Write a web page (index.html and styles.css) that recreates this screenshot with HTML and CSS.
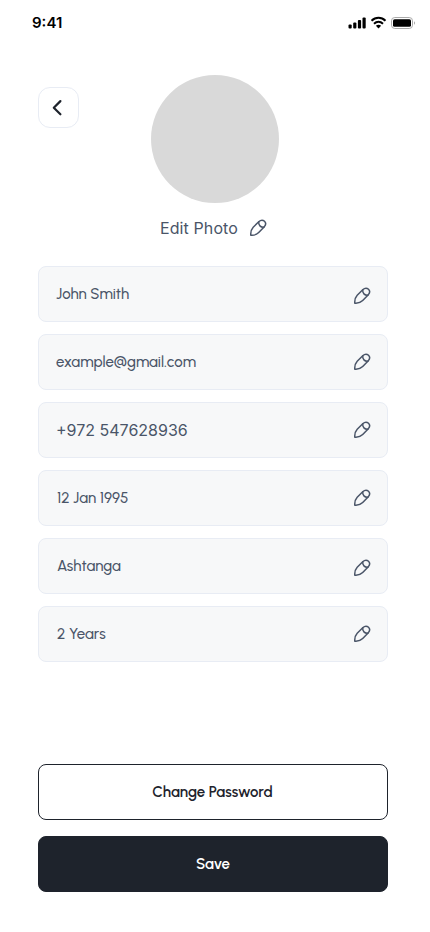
FILE: index.html
```html
<!DOCTYPE html>
<html lang="en">
<head>
<meta charset="utf-8">
<meta name="viewport" content="width=device-width, initial-scale=1">
<title>Edit Profile</title>
<link rel="stylesheet" href="styles.css">
</head>
<body>
<svg class="defs" aria-hidden="true">
  <symbol id="pencil" viewBox="0 0 18 18">
    <path d="M1.8 16.2C1.5 12.9 2.2 10.4 4.2 8.2L9.7 2.8C11.6 1 14 .9 15.5 2.3C17 3.8 16.8 6.2 15.1 8L9.7 13.6C7.6 15.7 5.2 16.5 1.8 16.2Z"/>
    <path d="M9.8 2.9C9.2 6.1 11.7 8.6 15 8.1"/>
  </symbol>
</svg>
<header class="status">
  <span class="time">9:41</span>
  <svg class="indicators" viewBox="0 0 68 14">
    <rect x="0.5" y="8.5" width="3.2" height="4" rx="1"/>
    <rect x="5.2" y="6.5" width="3.2" height="6" rx="1"/>
    <rect x="9.9" y="4" width="3.2" height="8.5" rx="1"/>
    <rect x="14.5" y="1.5" width="3.2" height="11" rx="1"/>
    <path class="wave" d="M23.5 4.8C27.6 .8 33.4 .8 37.5 4.8M26 7.7C28.7 5.2 32.3 5.2 35 7.7"/>
    <path d="M27.9 9.8C29.4 8.5 31.6 8.5 33.1 9.8L30.5 12.5Z"/>
    <rect class="shell" x="43.5" y="1.5" width="21" height="11" rx="3.3"/>
    <rect x="45" y="3.2" width="18" height="7.6" rx="1.6"/>
    <path class="cap" d="M66 5.2C67.4 5.8 67.4 8.2 66 8.8Z"/>
  </svg>
</header>
<main>
  <section class="profile">
    <button class="back" aria-label="Back"><svg viewBox="0 0 12 18"><path d="M9.4 2.1L2.8 8.7L9.4 15.3"/></svg></button>
    <div class="avatar"></div>
  </section>
  <div class="photo"><span>Edit Photo</span><svg class="pencil"><use href="#pencil"/></svg></div>
  <section class="fields">
    <div class="field"><span>John Smith</span><svg class="pencil low"><use href="#pencil"/></svg></div>
    <div class="field"><span>example@gmail.com</span><svg class="pencil"><use href="#pencil"/></svg></div>
    <div class="field"><span class="phone">+972 547628936</span><svg class="pencil"><use href="#pencil"/></svg></div>
    <div class="field inset"><span>12 Jan 1995</span><svg class="pencil"><use href="#pencil"/></svg></div>
    <div class="field inset"><span>Ashtanga</span><svg class="pencil low"><use href="#pencil"/></svg></div>
    <div class="field inset"><span>2 Years</span><svg class="pencil"><use href="#pencil"/></svg></div>
  </section>
  <section class="actions">
    <button class="action outline">Change Password</button>
    <button class="action solid">Save</button>
  </section>
</main>
</body>
</html>
```
FILE: styles.css
```css
* { box-sizing: border-box; }
body { margin: 0; width: 430px; height: 932px; overflow: hidden; background: #fff; color: #4a5568; font-family: Urbanist, Lato, sans-serif; }
button { padding: 0; font: inherit; }
svg { display: block; flex: none; }
.defs { display: none; }
.status { height: 46px; padding: 0 14px 0 32px; display: flex; align-items: center; justify-content: space-between; color: #000; }
.time { font: 600 15px/18px Inter, sans-serif; }
.indicators { width: 68px; height: 14px; }
.indicators .wave { fill: none; stroke: #000; stroke-width: 2; }
.indicators .shell { fill: none; stroke: #aaa; }
.indicators .cap { fill: #aaa; }
main { padding: 29px 42px 0 38px; }
.profile { display: flex; align-items: flex-start; height: 128px; }
.back { margin-top: 12px; width: 41px; height: 41px; border: 1px solid #e8ecf4; border-radius: 12px; background: #fff; display: flex; align-items: center; justify-content: center; }
.back svg { width: 12px; height: 18px; margin-right: 4px; }
.back path { fill: none; stroke: #1e232c; stroke-width: 2.2; stroke-linecap: round; stroke-linejoin: round; }
.avatar { width: 128px; height: 128px; margin-left: 72px; border-radius: 50%; background: #d9d9d9; }
.photo { display: flex; align-items: center; height: 20px; margin: 15px 0 0 122px; gap: 11px; font: 400 16px/20px Inter, sans-serif; }
.photo span { letter-spacing: 0.1px; }
.pencil { width: 18px; height: 18px; fill: none; stroke: #4a5568; stroke-width: 1.5; stroke-linecap: round; stroke-linejoin: round; }
.low { margin-top: 4px; }
.fields { display: grid; gap: 12px; margin-top: 28px; }
.field { height: 56px; padding: 0 16px 0 17px; border: 1px solid #e8ecf4; border-radius: 8px; background: #f7f8f9; display: flex; align-items: center; justify-content: space-between; font-size: 15px; font-weight: 500; line-height: 20px; }
.inset { padding-left: 18px; }
.field .phone { font: 400 16px/20px Inter, sans-serif; }
.actions { display: grid; gap: 16px; margin-top: 102px; }
.action { height: 56px; border: 1px solid #1e232c; border-radius: 8px; font-size: 15px; font-weight: 600; display: flex; align-items: center; justify-content: center; }
.outline { padding-right: 1px; background: #fff; color: #1e232c; }
.solid { background: #1e232c; color: #fff; }
```
